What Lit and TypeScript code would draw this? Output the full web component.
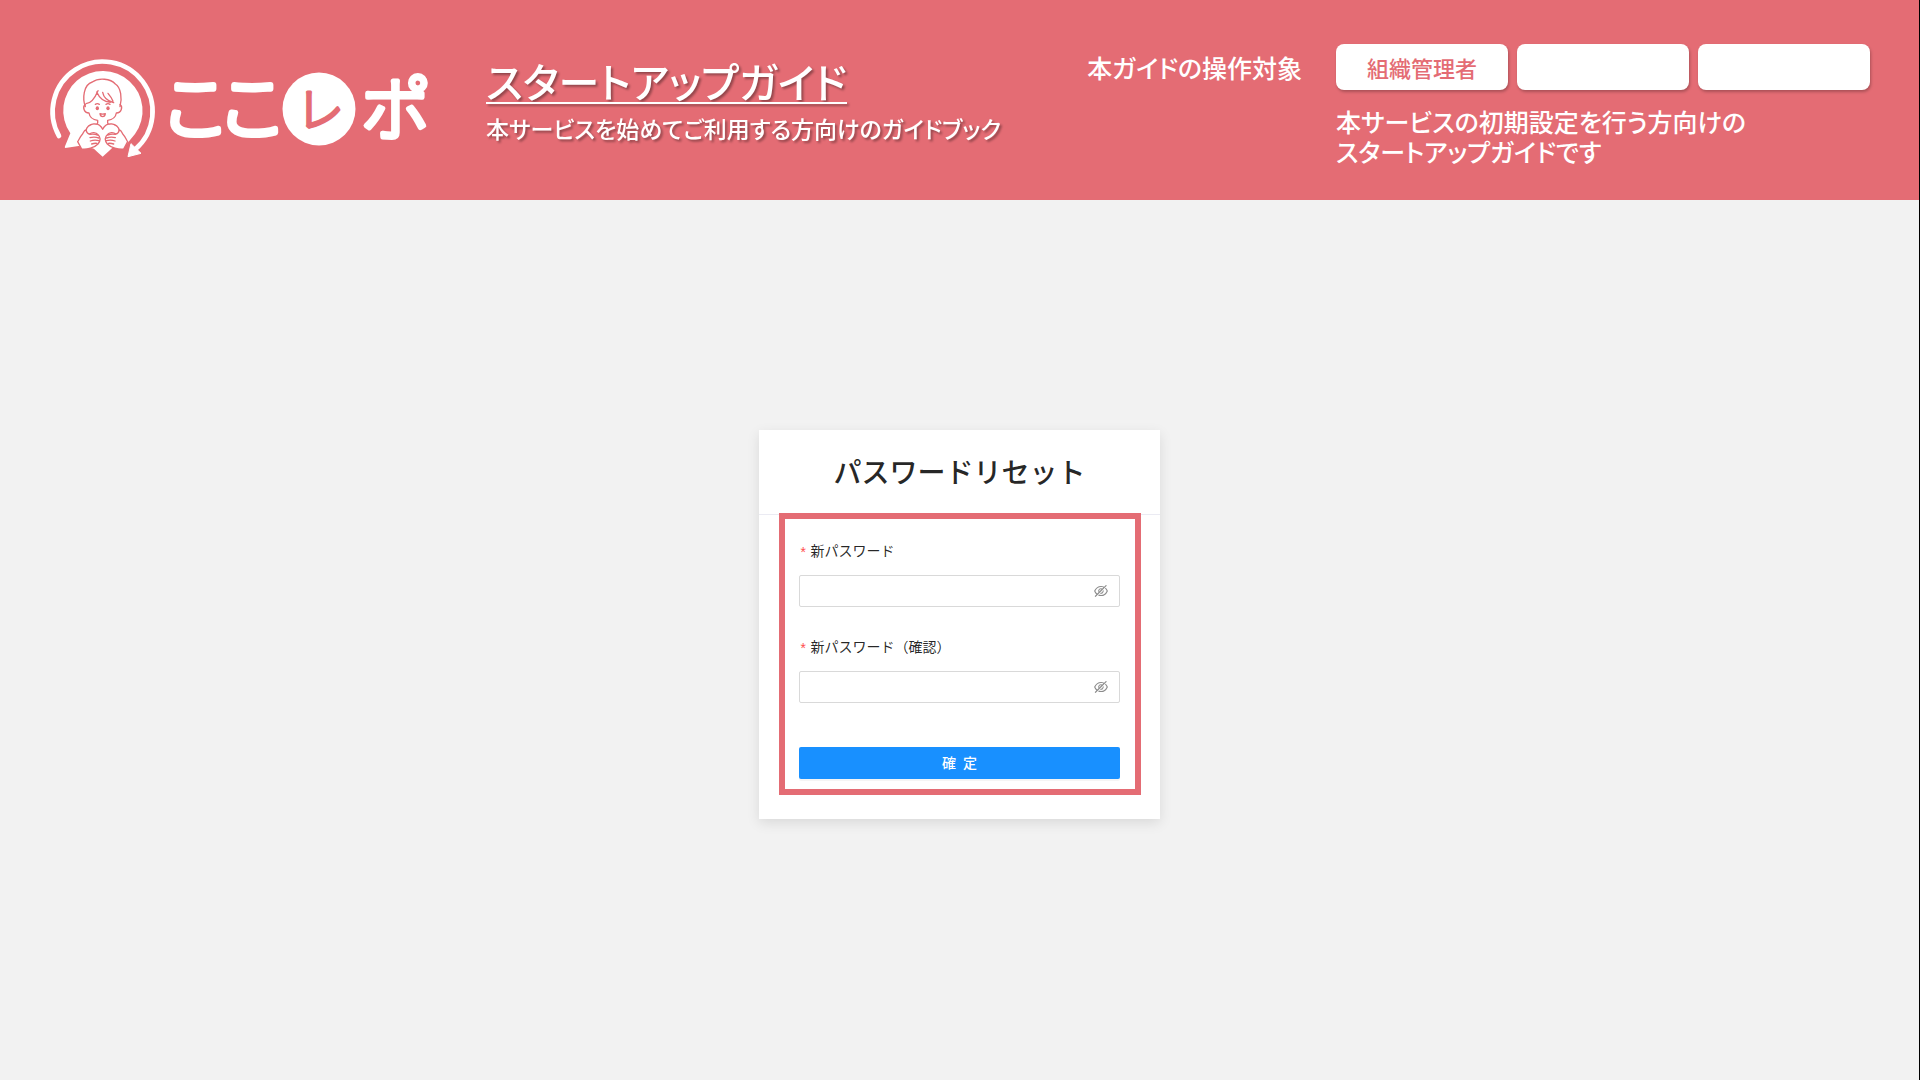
import { LitElement, html, css, svg } from "lit";
import { customElement, property, state } from "lit/decorators.js";

const eyeInvisible = svg`
  <path d="M942.2 486.2Q889.47 375.11 816.7 305l-50.88 50.88C807.31 395.53 843.45 447.4 874.7 512 791.5 684.2 673.4 766 512 766q-72.67 0-133.87-22.38L323 798.75Q408 838 512 838q288.3 0 430.2-300.3a60.29 60.29 0 000-51.5zm-63.57-320.64L836 122.88a8 8 0 00-11.32 0L715.31 232.2Q624.86 186 512 186q-288.3 0-430.2 300.3a60.3 60.3 0 000 51.5q56.69 119.4 136.5 191.41L112.48 835a8 8 0 000 11.31L155.17 889a8 8 0 0011.31 0l712.15-712.12a8 8 0 000-11.32zM149.3 512C232.6 339.8 350.7 258 512 258c54.54 0 104.13 9.36 149.12 28.39l-70.3 70.3a176 176 0 00-238.13 238.13l-83.42 83.42C223.1 637.49 183.3 582.28 149.3 512zm246.7 0a112.11 112.11 0 01146.2-106.69L401.31 546.2A112 112 0 01396 512z"/>
  <path d="M508 624c-3.46 0-6.87-.16-10.25-.47l-52.82 52.82a176.09 176.09 0 00227.42-227.42l-52.82 52.82c.31 3.38.47 6.79.47 10.25a111.94 111.94 0 01-112 112z"/>`;

@customElement("brand-logo")
export class BrandLogo extends LitElement {
  static styles = css`
    :host { display: block; flex: none; }
    .logo { display: block; width: 400px; height: 104px; overflow: visible; }
    .word {
      font-family: "Noto Sans CJK JP", sans-serif;
      font-weight: 300;
      fill: #fff;
      stroke: #fff;
      stroke-width: 6;
      stroke-linejoin: round;
    }
    .kana { font-size: 70px; }
    .re { font-size: 48px; fill: #e46c74; stroke: #e46c74; stroke-width: 3; }
    .po { font-size: 70px; stroke-width: 5; }
    .solid { fill: #fff; }
    .ring { fill: none; stroke: #fff; stroke-width: 14; stroke-linecap: round; }
    .line { fill: none; stroke: #e46c74; stroke-width: 4; stroke-linecap: round; stroke-linejoin: round; }
    .outlined { fill: #fff; stroke: #e46c74; stroke-width: 4; stroke-linejoin: round; }
    .dot { fill: #e46c74; }
  `;

  render() {
    return html`
      <svg class="logo" viewBox="0 0 400 104" role="img" aria-label="ここレポ">
        <g transform="translate(-10 -18) scale(0.33333)">
          <path class="ring" d="M57 288A150 150 0 1 1 286 328" />
          <path class="solid" d="M273 311L303 340L264 350Z" stroke="#fff" stroke-width="3" stroke-linejoin="round" />
          <path class="solid" d="M91 280A119 119 0 1 1 285 282L262 310L188 330L116 318L76 324Q73 323 75 319Z" />
          <path class="line" d="M136 200C127 176 130 134 157 126C176 112 212 116 226 132C243 142 247 176 240 200" />
          <path class="line" d="M174 152C163 178 152 190 138 191M170 156C180 178 195 186 211 187M188 157C191 174 203 183 221 188M204 160C211 168 216 175 219 184" />
          <path class="line" d="M136 194C127 200 131 219 147 219C149 232 157 239 173 241V249C172 256 160 256 148 258M240 194C249 200 245 219 229 219C227 232 219 239 203 241V249C204 256 216 256 228 258" />
          <path class="line" stroke-width="2" d="M166 193Q172 189 178 193M198 193Q204 189 210 193" />
          <ellipse class="dot" cx="172" cy="205" rx="5" ry="6" />
          <ellipse class="dot" cx="204" cy="205" rx="5" ry="6" />
          <path class="line" d="M180 221Q188 224 196 221Q195 230 188 230Q181 230 180 221Z" />
          <path class="solid" d="M188 350C164 329 136 305 137 278C138 252 176 244 188 266C200 244 238 252 239 278C240 305 212 329 188 350Z" />
          <path class="line" d="M138 272C143 248 177 243 188 268C199 243 233 248 238 272" />
          <path class="outlined" d="M138 270C131 270 131 279 126 284C119 291 117 300 113 305L125 327C139 330 165 322 174 312C182 303 183 291 174 284C168 276 155 276 149 282C143 282 140 277 138 270Z" />
          <path class="line" d="M150 283Q162 281 173 285M150 293Q163 289 177 294M151 303Q164 298 177 302M155 312Q164 309 171 310" />
          <path class="outlined" d="M238 270C245 270 245 279 250 284C257 291 259 300 263 305L251 327C237 330 211 322 202 312C194 303 193 291 202 284C208 276 221 276 227 282C233 282 236 277 238 270Z" />
          <path class="line" d="M226 283Q214 281 203 285M226 293Q213 289 199 294M225 303Q212 298 199 302M221 312Q212 309 205 310" />
        </g>
        <text class="word kana" x="115 172" y="76">ここ</text>
        <circle class="solid" cx="269" cy="51" r="36.5" />
        <text class="word re" x="249" y="69">レ</text>
        <text class="word po" x="311" y="77">ポ</text>
      </svg>
    `;
  }
}

@customElement("password-field")
export class PasswordField extends LitElement {
  @property() label = "";
  @state() private shown = false;

  static styles = css`
    :host { display: block; }
    .label {
      display: flex;
      align-items: center;
      gap: 3px;
      height: 30px;
      margin-bottom: 10px;
      color: rgba(0, 0, 0, 0.85);
    }
    .mark { padding-top: 8px; color: #ff4d4f; font-family: "Liberation Mono", monospace; }
    .box {
      display: flex;
      align-items: center;
      box-sizing: border-box;
      height: 32px;
      padding: 0 11px;
      border: 1px solid #d9d9d9;
      border-radius: 2px;
      background: #fff;
    }
    .input {
      flex: 1;
      min-width: 0;
      padding: 0;
      border: 0;
      outline: 0;
      background: none;
      font: inherit;
    }
    .toggle {
      display: flex;
      padding: 0;
      border: 0;
      background: none;
      color: rgba(0, 0, 0, 0.45);
      cursor: pointer;
    }
    .icon { width: 14px; height: 14px; fill: currentColor; }
  `;

  render() {
    return html`
      <label class="label" for="field"><span class="mark">*</span>${this.label}</label>
      <div class="box">
        <input class="input" id="field" type=${this.shown ? "text" : "password"} required />
        <button class="toggle" type="button" aria-label="パスワードの表示切替"
          @click=${() => { this.shown = !this.shown; }}>
          <svg class="icon" viewBox="64 64 896 896" aria-hidden="true">${eyeInvisible}</svg>
        </button>
      </div>
    `;
  }
}

@customElement("app-root")
export class AppRoot extends LitElement {
  static styles = css`
    :host {
      display: flex;
      flex-direction: column;
      box-sizing: border-box;
      min-height: 100vh;
      border-right: 1px solid #000;
      background: #f2f2f2;
      font-family: "Noto Sans CJK JP", sans-serif;
      font-size: 14px;
      line-height: 22px;
    }
    .header {
      display: flex;
      align-items: flex-start;
      box-sizing: border-box;
      min-height: 200px;
      padding: 44px 49px 0 50px;
      background: #e46c74;
      color: #fff;
      font-weight: 500;
      font-feature-settings: "palt";
    }
    .logo { margin-top: 14px; }
    .titles {
      margin: 14px auto 0 36px;
      filter: drop-shadow(2px 2px 1px rgba(0, 0, 0, 0.35));
    }
    .title {
      width: max-content;
      margin: 0;
      border-bottom: 2px solid #fff;
      font-size: 41px;
      font-weight: 500;
      line-height: 44px;
    }
    .lead { margin: 8px 0 0; font-size: 23px; line-height: 32px; }
    .target { display: flex; align-items: flex-start; gap: 34px; }
    .target-label { font-size: 25px; line-height: 46px; }
    .roles { display: grid; grid-template-columns: repeat(3, 172px); gap: 9px; }
    .role {
      box-sizing: border-box;
      height: 46px;
      border-radius: 8px;
      background: #fff;
      box-shadow: 1px 2px 3px rgba(0, 0, 0, 0.25);
      color: #e46c74;
      font-size: 22px;
      line-height: 46px;
      text-align: center;
    }
    .note { margin: 16px 0 0; font-size: 25px; line-height: 30px; }
    .main {
      display: flex;
      flex: 1;
      align-items: center;
      justify-content: center;
      padding-bottom: 31px;
    }
    .card {
      position: relative;
      width: 401px;
      background: #fff;
      box-shadow: 0 4px 12px rgba(0, 0, 0, 0.1);
    }
    .card-title {
      margin: 0;
      padding-bottom: 2px;
      border-bottom: 1px solid #ebebf3;
      color: rgba(0, 0, 0, 0.85);
      font-size: 28px;
      font-weight: 500;
      line-height: 82px;
      text-align: center;
    }
    .form { display: grid; gap: 24px; padding: 20px 40px; padding-bottom: 40px; }
    .submit {
      display: flex;
      align-items: center;
      justify-content: center;
      gap: 7px;
      height: 32px;
      margin-top: 20px;
      padding: 0 0 2px;
      border: 0;
      border-radius: 2px;
      background: #1890ff;
      box-shadow: 0 2px 0 rgba(0, 0, 0, 0.04);
      color: #fff;
      font: inherit;
      font-weight: 500;
      cursor: pointer;
    }
    .highlight {
      position: absolute;
      inset: 83px 19px 24px 20px;
      border: 6px solid #e46c74;
      pointer-events: none;
    }
  `;

  render() {
    return html`
      <header class="header">
        <brand-logo class="logo"></brand-logo>
        <div class="titles">
          <h1 class="title">スタートアップガイド</h1>
          <p class="lead">本サービスを始めてご利用する方向けのガイドブック</p>
        </div>
        <div class="target">
          <span class="target-label">本ガイドの操作対象</span>
          <div>
            <div class="roles">
              <span class="role">組織管理者</span>
              <span class="role"></span>
              <span class="role"></span>
            </div>
            <p class="note">本サービスの初期設定を行う方向けの<br />スタートアップガイドです</p>
          </div>
        </div>
      </header>
      <main class="main">
        <section class="card">
          <h2 class="card-title">パスワードリセット</h2>
          <form class="form" @submit=${(e: Event) => e.preventDefault()}>
            <password-field label="新パスワード"></password-field>
            <password-field label="新パスワード（確認）"></password-field>
            <button class="submit" type="submit"><span>確</span><span>定</span></button>
          </form>
          <div class="highlight"></div>
        </section>
      </main>
    `;
  }
}
